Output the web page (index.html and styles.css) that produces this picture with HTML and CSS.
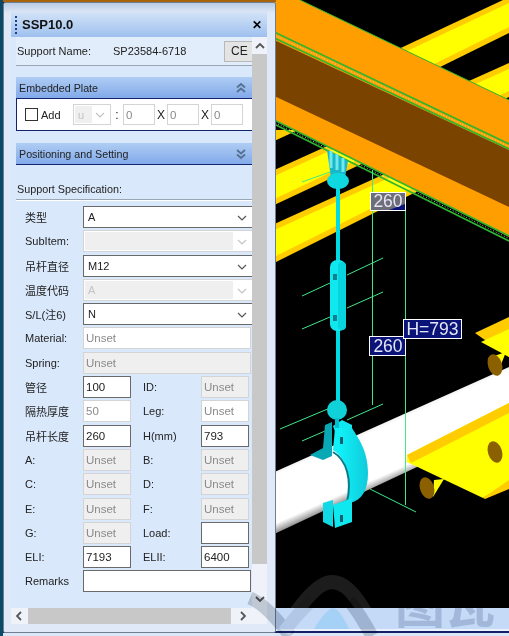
FILE: index.html
```html
<!DOCTYPE html>
<html lang="en">
<head>
<meta charset="utf-8">
<title>SSP10.0</title>
<link rel="stylesheet" href="styles.css">
</head>
<body>
<svg class="scene" viewBox="0 0 509 636" width="509" height="636" aria-hidden="true">
  <defs>
    <linearGradient id="pipe" gradientUnits="userSpaceOnUse" x1="300" y1="460.6" x2="323" y2="512">
      <stop offset="0" stop-color="#f2f2f2"/>
      <stop offset=".06" stop-color="#fff"/>
      <stop offset=".84" stop-color="#fff"/>
      <stop offset="1" stop-color="#909090"/>
    </linearGradient>
    <linearGradient id="band" gradientUnits="userSpaceOnUse" x1="340" y1="470" x2="370" y2="470">
      <stop offset="0" stop-color="#10f0f8"/>
      <stop offset="1" stop-color="#10c8d8"/>
    </linearGradient>
  </defs>
  <rect width="509" height="636" fill="#000"/>
  <!-- yellow beams: gold body with a bright middle -->
  <g fill="#ffcc00">
    <polygon points="390,53 503,0 509,0 509,33 430,72"/>
    <polygon points="460,85 509,63 509,97 470,115"/>
    <polygon points="270,172 345,138 370,160 270,207"/>
    <polygon points="270,226 400,167 440,180 270,265"/>
    <polygon points="270,130 298,130 270,143"/>
    <polygon points="475,333 509,317 509,357"/>
  </g>
  <g fill="#ffff00">
    <polygon points="390,59 509,3 509,27 430,66"/>
    <polygon points="460,91 509,69 509,91 470,109"/>
    <polygon points="270,178 345,144 370,154 270,201"/>
    <polygon points="270,232 400,173 440,174 270,259"/>
    <polygon points="481,342 509,329 509,357"/>
  </g>
  <!-- white pipe -->
  <polygon points="270,474 509,367 509,412 417,467 270,536" fill="url(#pipe)"/>
  <!-- right side plates -->
  <polygon points="407,455 509,403 509,483 483,498 407,462" fill="#ffff00"/>
  <polygon points="407,455 509,403 509,413 411,463" fill="#ffcc00"/>
  <polygon points="483,498 509,480 509,489 485,499" fill="#ffcc00"/>
  <polygon points="434,480 444,479 433,497" fill="#ffff00"/>
  <polygon points="488,358 506,352 498,372" fill="#ffff00"/>
  <ellipse cx="495" cy="365" rx="7" ry="11" transform="rotate(-18 495 365)" fill="#8a6000"/>
  <ellipse cx="495" cy="452" rx="7" ry="11" transform="rotate(-18 495 452)" fill="#8a6000"/>
  <ellipse cx="427" cy="488" rx="7" ry="11" transform="rotate(-18 427 488)" fill="#8a6000"/>
  <!-- orange beam -->
  <polygon points="270,0 300,0 509,100 509,237 477,220 270,118" fill="#ff9e00"/>
  <polygon points="270,38 509,150 509,207 270,94" fill="#7b4300"/>
  <g class="beam-edge">
    <line x1="270" y1="30" x2="509" y2="144"/>
    <line x1="270" y1="36" x2="509" y2="149"/>
    <line x1="270" y1="118" x2="509" y2="236"/>
    <line x1="270" y1="122" x2="509" y2="241"/>
  </g>
  <line class="beam-top" x1="300" y1="0" x2="509" y2="100"/>
  <g class="beam-dots">
    <line x1="270" y1="33" x2="509" y2="146.5"/>
    <line x1="270" y1="120" x2="509" y2="238.5"/>
  </g>
  <!-- green dimension lines -->
  <g class="dim">
    <line x1="372.5" y1="170" x2="372.5" y2="405"/>
    <line x1="405.5" y1="210" x2="405.5" y2="505"/>
    <line x1="347" y1="275" x2="383" y2="258"/>
    <line x1="302" y1="296" x2="330" y2="283"/>
    <line x1="302" y1="329" x2="330" y2="317"/>
    <line x1="347" y1="308" x2="383" y2="292"/>
    <line x1="347" y1="420" x2="383" y2="404"/>
    <line x1="280" y1="429" x2="330" y2="408"/>
    <line x1="302" y1="182" x2="330" y2="172"/>
    <line x1="302" y1="441" x2="325" y2="431"/>
    <line x1="370" y1="489" x2="416" y2="512"/>
  </g>
  <!-- cyan hanger -->
  <g>
    <rect x="336" y="185" width="4" height="225" fill="#00dce4"/>
    <polygon points="327,150 348,161 345,178 331,178" fill="#18b8c8"/>
    <path d="M331 151v17M337 154v16M343 158v14" stroke="#70e8ee" stroke-width="3"/>
    <ellipse cx="338" cy="181" rx="11" ry="8" fill="#10d8e0"/>
    <rect x="330" y="260" width="16" height="71" rx="7" fill="#10e8f0"/>
    <rect x="338" y="262" width="8" height="68" rx="4" fill="#08d4e0"/>
    <rect x="333" y="274" width="4" height="6" fill="#108090"/>
    <rect x="333" y="315" width="4" height="6" fill="#108090"/>
    <polygon points="310,455 323,448 325,425 332,422 332,456 323,460" fill="#08a8b4"/>
    <polygon points="333,426 342,420 352,425 352,440 340,445" fill="#10e8f0"/>
    <ellipse cx="337" cy="410" rx="10" ry="10" fill="#10d0d8"/>
    <rect x="335" y="418" width="4" height="14" fill="#00c0d0"/>
    <path d="M333 450 C347 458 352 480 347 503 L350 503 C362 500 368 490 368 473 C368 450 358 438 352 428 L335 428Z" fill="url(#band)"/>
    <path d="M333 452 C347 460 352 480 347 502" fill="none" stroke="#087c88" stroke-width="2"/>
    <polygon points="323,503 333,500 333,527 323,522" fill="#10d8e4"/>
    <polygon points="333,505 352,498 352,522 335,528" fill="#10e8f0"/>
    <rect x="340" y="515" width="3" height="7" fill="#106070"/>
    <rect x="340" y="437" width="3" height="7" fill="#106070"/>
  </g>
  <!-- dimension labels -->
  <rect class="tag tag-dim" x="370.5" y="192.5" width="35" height="18"/>
  <polygon points="389,210 405,204 405,210" fill="#0a1478"/>
  <text class="tag-text" x="388" y="207" text-anchor="middle">260</text>
  <rect class="tag" x="369.5" y="336.5" width="36" height="19"/>
  <text class="tag-text" x="388" y="352" text-anchor="middle">260</text>
  <rect class="tag" x="403.5" y="319.5" width="58" height="19"/>
  <text class="tag-text" x="432.5" y="335" text-anchor="middle">H=793</text>
  <!-- faint watermark on the black area -->
  <path class="wm-faint" d="M284 630 C300 605 318 582 332 582 C350 582 366 610 376 636"/>
  <!-- window behind the scene -->
  <rect y="608" width="509" height="21" fill="#c4daf6"/>
  <path d="M314 629 C322 615 330 608 333 608 C338 608 344 618 349 629Z" fill="#a6d1f6"/>
  <rect y="629" width="509" height="2" fill="#eaf1fb"/>
  <rect y="631" width="509" height="2" fill="#14206a"/>
  <rect y="633" width="509" height="3" fill="#dbe7f7"/>
  <rect width="276" height="2" fill="#a8640a"/>
  <rect width="3" height="636" fill="#0a4a66"/>
</svg>

<section class="window">
  <header class="titlebar">
    <span class="grip"></span>
    <h1 class="title">SSP10.0</h1>
    <span class="close">✕</span>
  </header>
  <div class="body">
    <div class="content">
      <div class="name-row">
        <span class="name-label">Support Name:</span>
        <span class="name-value">SP23584-6718</span>
        <button class="ce" type="button">CE</button>
      </div>

      <div class="section-head">
        <span>Embedded Plate</span>
        <svg class="fold" viewBox="0 0 10 12" width="10" height="12"><path d="M1 5.5 5 2l4 3.5M1 10 5 6.5 9 10"/></svg>
      </div>
      <div class="plate">
        <label class="add"><span class="check"></span>Add</label>
        <div class="sel sel-mini is-off"><span class="sel-val">u</span><svg class="chev" viewBox="0 0 10 6" width="10" height="6"><path d="M1 1l4 4 4-4"/></svg></div>
        <span class="sep sep-colon">:</span>
        <input class="box box-mini" value="0" disabled>
        <span class="sep">X</span>
        <input class="box box-mini" value="0" disabled>
        <span class="sep">X</span>
        <input class="box box-mini" value="0" disabled>
      </div>

      <div class="section-head section-second">
        <span>Positioning and Setting</span>
        <svg class="fold" viewBox="0 0 10 12" width="10" height="12"><path d="M1 2l4 3.5L9 2M1 6.5 5 10l4-3.5"/></svg>
      </div>

      <div class="spec-title">Support Specification:</div>

      <div class="form">
        <div class="row"><span class="lab">类型</span><div class="sel sel-wide"><span class="sel-val">A</span><svg class="chev" viewBox="0 0 10 6" width="10" height="6"><path d="M1 1l4 4 4-4"/></svg></div></div>
        <div class="row"><span class="lab">SubItem:</span><div class="sel sel-wide is-off"><span class="sel-val"></span><svg class="chev" viewBox="0 0 10 6" width="10" height="6"><path d="M1 1l4 4 4-4"/></svg></div></div>
        <div class="row"><span class="lab">吊杆直径</span><div class="sel sel-wide"><span class="sel-val">M12</span><svg class="chev" viewBox="0 0 10 6" width="10" height="6"><path d="M1 1l4 4 4-4"/></svg></div></div>
        <div class="row"><span class="lab">温度代码</span><div class="sel sel-wide is-off"><span class="sel-val">A</span><svg class="chev" viewBox="0 0 10 6" width="10" height="6"><path d="M1 1l4 4 4-4"/></svg></div></div>
        <div class="row"><span class="lab">S/L(注6)</span><div class="sel sel-wide"><span class="sel-val">N</span><svg class="chev" viewBox="0 0 10 6" width="10" height="6"><path d="M1 1l4 4 4-4"/></svg></div></div>
        <div class="row"><span class="lab">Material:</span><input class="box box-wide is-light" value="Unset" disabled></div>
        <div class="row"><span class="lab">Spring:</span><input class="box box-wide" value="Unset" disabled></div>
        <div class="row"><span class="lab">管径</span><input class="box box-on" value="100"><span class="lab lab-2">ID:</span><input class="box" value="Unset" disabled></div>
        <div class="row"><span class="lab">隔热厚度</span><input class="box is-light" value="50" disabled><span class="lab lab-2">Leg:</span><input class="box is-light" value="Unset" disabled></div>
        <div class="row"><span class="lab">吊杆长度</span><input class="box box-on" value="260"><span class="lab lab-2">H(mm)</span><input class="box box-on" value="793"></div>
        <div class="row"><span class="lab">A:</span><input class="box" value="Unset" disabled><span class="lab lab-2">B:</span><input class="box" value="Unset" disabled></div>
        <div class="row"><span class="lab">C:</span><input class="box" value="Unset" disabled><span class="lab lab-2">D:</span><input class="box" value="Unset" disabled></div>
        <div class="row"><span class="lab">E:</span><input class="box" value="Unset" disabled><span class="lab lab-2">F:</span><input class="box" value="Unset" disabled></div>
        <div class="row"><span class="lab">G:</span><input class="box" value="Unset" disabled><span class="lab lab-2">Load:</span><input class="box box-on" value=""></div>
        <div class="row"><span class="lab">ELI:</span><input class="box box-on" value="7193"><span class="lab lab-2">ELII:</span><input class="box box-on" value="6400"></div>
        <div class="row"><span class="lab">Remarks</span><input class="box box-wide box-on" value=""></div>
      </div>
    </div>
    <div class="vscroll">
      <svg class="arrow" viewBox="0 0 10 6" width="10" height="6"><path d="M1 5l4-4 4 4"/></svg>
      <div class="vthumb"></div>
      <svg class="arrow" viewBox="0 0 10 6" width="10" height="6"><path d="M1 1l4 4 4-4"/></svg>
    </div>
  </div>
  <div class="hscroll">
    <svg class="arrow" viewBox="0 0 6 10" width="6" height="10"><path d="M5 1 1 5l4 4"/></svg>
    <div class="hthumb"></div>
    <svg class="arrow" viewBox="0 0 6 10" width="6" height="10"><path d="M1 1l4 4-4 4"/></svg>
  </div>
</section>

<svg class="watermark" viewBox="0 0 509 636" width="509" height="636" aria-hidden="true">
  <path class="wm-arc" d="M250 598 C264 604 276 618 290 636"/>
  <path class="wm-arc wm-arc-soft" d="M284 632 C296 615 304 608 312 600"/>
  <path class="wm-arc" d="M349 600 C358 612 366 625 372 636"/>
  <text x="395" y="623" class="wm-text">图瓦</text>
</svg>
</body>
</html>
```

FILE: styles.css
```css
* { box-sizing: border-box; }

html, body {
  margin: 0;
  width: 509px;
  height: 636px;
  overflow: hidden;
  background: #000;
  font-family: "Liberation Sans", "Noto Sans CJK SC", sans-serif;
  font-size: 11px;
  color: #222;
}

.scene { position: absolute; left: 0; top: 0; display: block; }
.watermark {
  position: absolute;
  left: 0;
  top: 0;
  display: block;
  pointer-events: none;
  mix-blend-mode: multiply;
}

.beam-edge line { stroke: #2fb52f; stroke-width: 1.6; }
.beam-top { stroke: #2fb52f; stroke-width: 1; }
.beam-dots line { stroke: #e8f0c0; stroke-width: .8; stroke-dasharray: 1 2; }
.dim line { stroke: #3fe88a; stroke-width: 1; }

.tag { fill: #0a1478; stroke: #fff; stroke-width: 1; }
.tag-dim { fill: #6e6e78; }
.tag-text {
  font-family: "Liberation Sans", sans-serif;
  font-size: 17.5px;
  fill: #e4e6f6;
}

.wm-faint { fill: none; stroke: #1c1c1c; stroke-width: 14; }
.wm-arc { fill: none; stroke: #cdd2d9; stroke-width: 13; }
.wm-arc-soft { stroke: #e6e9ee; }
.wm-text {
  font-family: "Noto Sans CJK SC", sans-serif;
  font-size: 50px;
  font-weight: 700;
  fill: #d2d8e2;
}

/* Window */
.window {
  position: absolute;
  left: 3px;
  top: 2px;
  width: 273px;
  height: 631px;
  padding: 9px 8px 8px 7px;
  display: flex;
  flex-direction: column;
  background: linear-gradient(#b8cbe4, #dfe9f7 10px);
  border: 1px solid #6d7f90;
  border-radius: 2px;
}

.titlebar {
  flex: none;
  height: 25px;
  display: flex;
  align-items: center;
  padding: 0 5px 0 4px;
  background: linear-gradient(#d3e3f8, #9ec0ee);
}
.grip {
  width: 2px;
  height: 18px;
  background: repeating-linear-gradient(#1b3f8a 0 2px, transparent 2px 4px);
}
.title {
  margin: 0 0 0 5px;
  flex: 1;
  font-size: 13px;
  font-weight: 700;
  color: #111;
}
.close { font-size: 12px; font-weight: 700; color: #000; }

.body { flex: none; height: 571px; display: flex; }

.content {
  width: 241px;
  flex: none;
  overflow: hidden;
  background: #d9e8fb;
  padding-left: 5px;
}

.name-row {
  height: 29px;
  display: flex;
  align-items: center;
  border-bottom: 1px solid #9aa6b4;
  padding-left: 1px;
  background: #e2edfb;
}
.name-label { flex: none; width: 96px; }
.name-value { flex: none; width: 111px; }
.ce {
  flex: none;
  width: 40px;
  height: 21px;
  padding: 0;
  border: 1px solid #b8b8b8;
  background: #e4e4e4;
  font: 12px "Liberation Sans", sans-serif;
  color: #222;
  text-align: left;
  text-indent: 6px;
}

.section-head {
  margin-top: 11px;
  height: 22px;
  display: flex;
  align-items: center;
  justify-content: space-between;
  padding: 0 6px 0 3px;
  font-size: 10.7px;
  background: linear-gradient(#afcdf4, #82aaea);
  border-bottom: 1px solid #12246e;
}
.section-second { margin-top: 12px; }
.fold { fill: none; stroke: #56708f; stroke-width: 1.8; }

.plate {
  height: 32px;
  display: flex;
  align-items: center;
  background: #fff;
  border-left: 1px solid #12246e;
  border-bottom: 1px solid #12246e;
  padding-left: 8px;
}
.add { display: flex; align-items: center; width: 48px; flex: none; }
.check {
  width: 13px;
  height: 13px;
  border: 1px solid #333;
  background: #fff;
  margin-right: 3px;
}
.sep { width: 12px; font-size: 12px; text-align: center; flex: none; }

.spec-title {
  height: 35px;
  padding: 14px 0 0 1px;
  line-height: 21px;
  font-size: 10.8px;
  border-bottom: 1px solid #9aa6b4;
  box-shadow: 0 1px 0 #fff;
}

.form {
  margin-top: 6px;
  display: flex;
  flex-direction: column;
  gap: 2.3px;
}
.row { height: 22px; display: flex; align-items: center; padding-left: 9px; }

.lab { width: 58px; flex: none; }
.lab-2 { margin-left: 12px; }

.box {
  width: 48px;
  height: 22px;
  flex: none;
  padding: 0 2px;
  border: 1px solid #d4d4d4;
  border-radius: 0;
  background: #efefef;
  color: #8a8a8a;
  font: 11.5px "Liberation Sans", sans-serif;
  outline: none;
}
.box-mini { width: 32px; background: #fff; height: 21px; }
.box-wide { width: 168px; }
.is-light { background: #fff; }
.box-on { border-color: #6a6a6a; background: #fff; color: #222; }

.sel {
  position: relative;
  height: 22px;
  flex: none;
  display: flex;
  align-items: center;
  border: 1px solid #6a6a6a;
  background: #fff;
  padding-left: 4px;
  color: #222;
}
.sel-wide { width: 180px; }
.sel-mini { width: 38px; height: 21px; }
.chev {
  position: absolute;
  right: 15px;
  top: 8px;
  fill: none;
  stroke: #555;
  stroke-width: 1.2;
}
.sel-mini .chev { right: 5px; top: 7px; stroke: #bbb; }
.is-off { border-color: #d4d4d4; color: #c4c4c4; }
.is-off .sel-val { position: relative; }
.is-off::before {
  content: "";
  position: absolute;
  left: 1px;
  top: 1px;
  bottom: 1px;
  right: 29px;
  background: #efefef;
}
.sel-mini.is-off::before { right: 18px; }
.is-off .chev { stroke: #c4c4c4; }

/* Scrollbars */
.vscroll {
  flex: 1;
  display: flex;
  flex-direction: column;
  align-items: center;
  background: #eff3f9;
  padding-top: 6px;
}
.vthumb {
  width: 100%;
  flex: none;
  height: 510px;
  margin-top: 5px;
  background: #c8c8c8;
}
.vscroll .arrow:last-child { margin-top: 32px; }
.arrow { fill: none; stroke: #555; stroke-width: 1.8; flex: none; }

.hscroll {
  flex: none;
  height: 16px;
  display: flex;
  align-items: center;
  padding-left: 5px;
  background: #eff3f9;
}
.hthumb {
  width: 203px;
  height: 100%;
  margin: 0 9px 0 6px;
  background: #c8c8c8;
}
```
